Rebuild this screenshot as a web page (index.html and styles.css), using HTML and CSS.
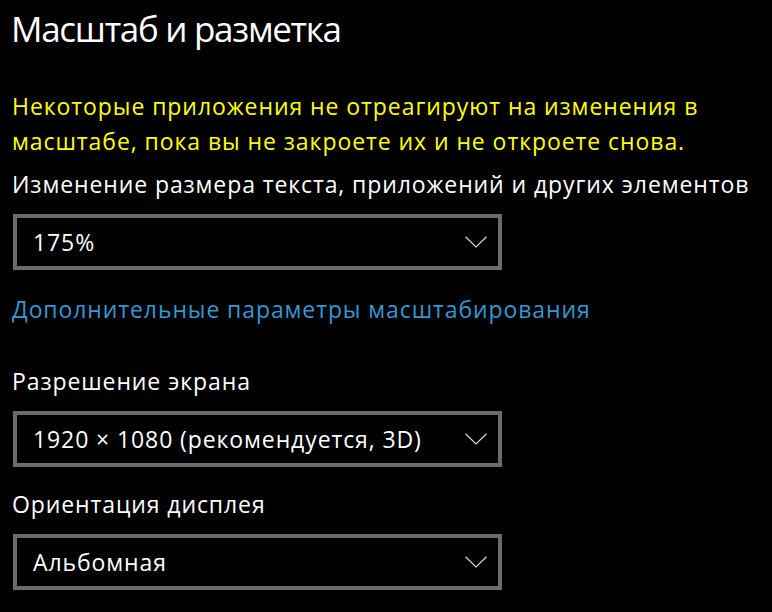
FILE: index.html
```html
<!DOCTYPE html>
<html lang="ru">
<head>
<meta charset="utf-8">
<link rel="stylesheet" href="styles.css">
</head>
<body>
<main class="page">
  <h1 class="title">Масштаб и разметка</h1>
  <p class="warning">Некоторые приложения не отреагируют на изменения в масштабе, пока вы не закроете их и не откроете снова.</p>
  <div class="label">Изменение размера текста, приложений и других элементов</div>
  <div class="select select-scale">
    <span class="select-value">175%</span>
    <svg class="chevron" width="22" height="12" viewBox="0 0 22 12"><path d="M0.5 0.8 L11 11 L21.5 0.8" fill="none" stroke="#d9d9d9" stroke-width="1.2"/></svg>
  </div>
  <a class="link" href="#">Дополнительные параметры масштабирования</a>
  <div class="label label-res">Разрешение экрана</div>
  <div class="select">
    <span class="select-value">1920 × 1080 (рекомендуется, 3D)</span>
    <svg class="chevron" width="22" height="12" viewBox="0 0 22 12"><path d="M0.5 0.8 L11 11 L21.5 0.8" fill="none" stroke="#d9d9d9" stroke-width="1.2"/></svg>
  </div>
  <div class="label label-orient">Ориентация дисплея</div>
  <div class="select">
    <span class="select-value">Альбомная</span>
    <svg class="chevron" width="22" height="12" viewBox="0 0 22 12"><path d="M0.5 0.8 L11 11 L21.5 0.8" fill="none" stroke="#d9d9d9" stroke-width="1.2"/></svg>
  </div>
</main>
</body>
</html>
```
FILE: styles.css
```css
html, body {
  margin: 0;
  padding: 0;
  background: #000;
}
body {
  font-family: "Open Sans", "Noto Sans", "DejaVu Sans", sans-serif;
  color: #fff;
  width: 772px;
  height: 612px;
  overflow: hidden;
}
.page {
  padding: 6px 0 0 12px;
  display: flex;
  flex-direction: column;
  align-items: flex-start;
}
.title {
  margin: 0 0 0 -1px;
  font-weight: 400;
  font-size: 35px;
  line-height: 46px;
  letter-spacing: -1.3px;
}
.warning {
  margin: 37px 0 0 0;
  color: #ffff00;
  font-size: 23px;
  line-height: 35px;
  letter-spacing: 0.93px;
  width: 740px;
}
.label {
  margin: 8px 0 0 0;
  font-size: 23px;
  line-height: 35px;
  letter-spacing: 0.9px;
}
.select {
  box-sizing: border-box;
  width: 489px;
  height: 56px;
  border: 4px solid #6b6b6b;
  display: flex;
  align-items: center;
  justify-content: space-between;
  padding: 0 11px 0 16px;
  margin: 12px 0 0 1px;
}
.select-value {
  font-size: 23px;
  line-height: 35px;
  letter-spacing: 0.9px;
}
.chevron {
  display: block;
}
.link {
  margin: 22px 0 0 0;
  color: #3298d2;
  text-decoration: none;
  font-size: 23px;
  line-height: 35px;
  letter-spacing: 0.9px;
}
.label-res {
  margin-top: 37px;
}
.label-orient {
  margin-top: 20px;
}
```
